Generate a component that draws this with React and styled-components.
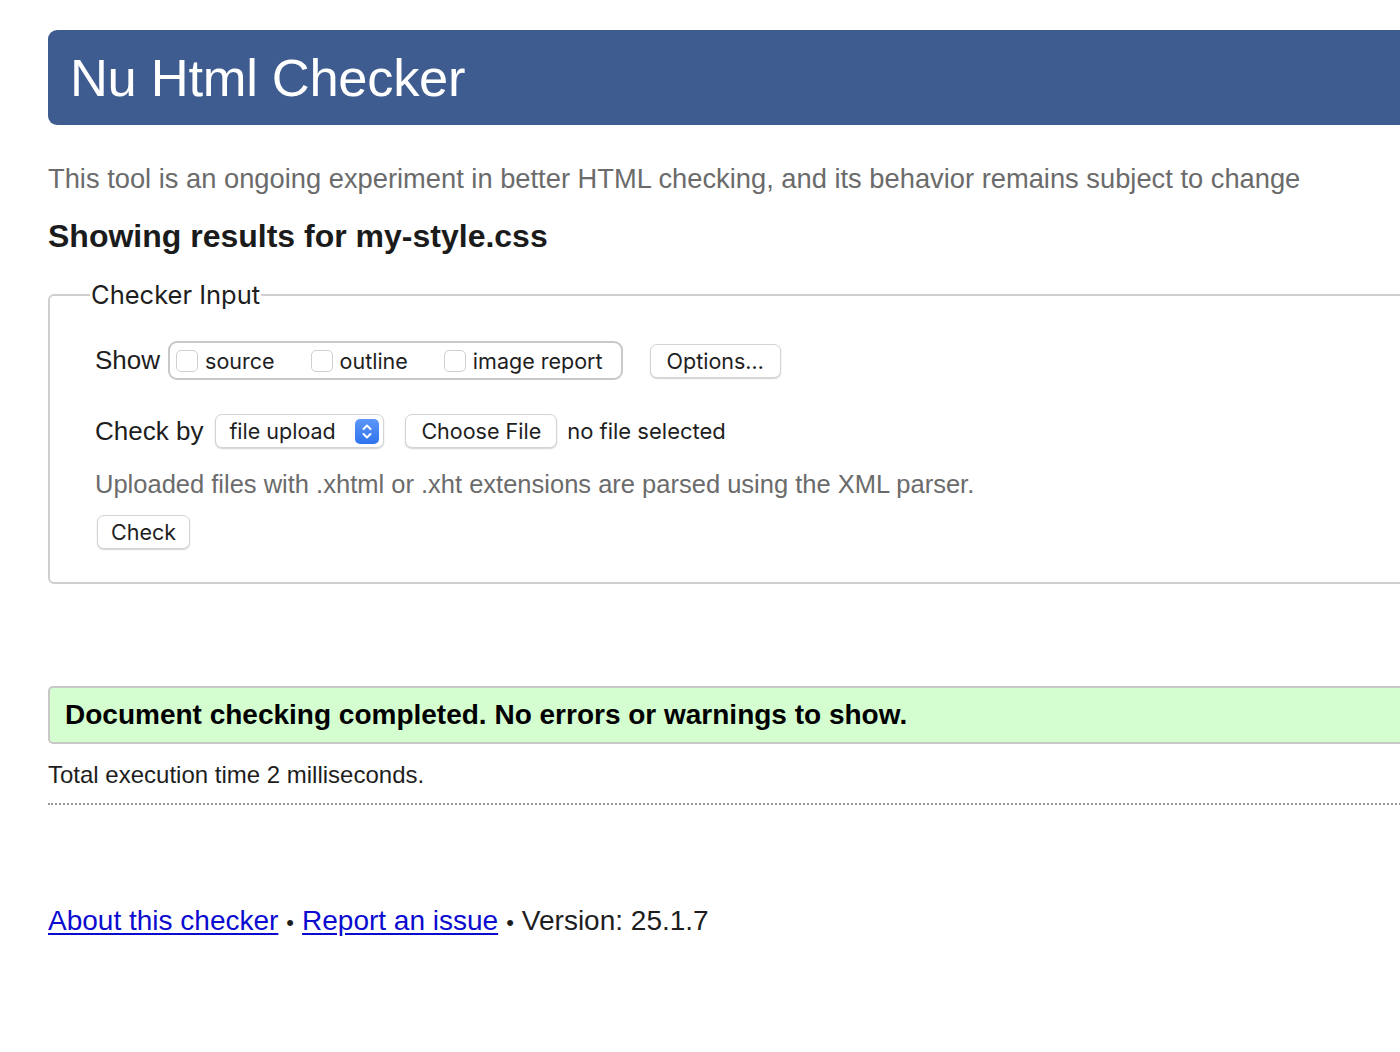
import React from "react";
import styled, { createGlobalStyle } from "styled-components";

const Global = createGlobalStyle`
  html, body { margin: 0; padding: 0; background: #fff; overflow: hidden; }
  body { font-family: "Liberation Sans", Arial, sans-serif; color: #1e1e1e; }
`;

const Page = styled.div`
  width: 1500px;
  padding: 30px 0 0 48px;
`;

const Header = styled.h1`
  margin: 0;
  height: 95px;
  display: flex;
  align-items: center;
  padding-left: 22px;
  background: #3e5c8f;
  color: #fff;
  border-radius: 9px;
  font-family: "Liberation Sans", Arial, sans-serif;
  font-weight: normal;
  font-size: 52.5px;
  letter-spacing: -0.3px;
`;

const Intro = styled.p`
  margin: 39px 0 0;
  font-size: 27.3px;
  color: #6b6b6b;
  line-height: 30px;
`;

const Results = styled.h2`
  margin: 24px 0 0;
  font-size: 32px;
  font-weight: bold;
  color: #1b1b1b;
  line-height: 36px;
`;

const Fieldset = styled.fieldset`
  margin: 27px 0 0;
  padding: 18px 0 33px 45px;
  border: 2px solid #cfcfcf;
  border-radius: 6px;
  min-width: 0;
`;

const Legend = styled.legend`
  padding: 0 1px;
  margin-left: -5px;
  font-family: Inter, "Liberation Sans", sans-serif;
  font-size: 25.5px;
  color: #1e1e1e;
  line-height: 28px;
`;

const Row = styled.div`
  display: flex;
  align-items: center;
  gap: ${(p) => p.$gap ?? 10}px;
  margin-top: ${(p) => p.$mt ?? 0}px;
`;

const Label = styled.span`
  font-family: "Liberation Sans", Arial, sans-serif;
  font-size: 26px;
  color: #1e1e1e;
  margin-right: ${(p) => p.$mr ?? 0}px;
`;

const Group = styled.div`
  display: flex;
  align-items: center;
  height: 35px;
  padding: 0 18px 0 6px;
  border: 2px solid #c8c8c8;
  border-radius: 9px;
  gap: 36px;
`;

const CheckItem = styled.label`
  display: flex;
  align-items: center;
  gap: 7px;
  font-family: Inter, "Liberation Sans", sans-serif;
  font-size: 21.5px;
  color: #1e1e1e;
`;

const Box = styled.span`
  width: 22px;
  height: 22px;
  box-sizing: border-box;
  border: 1.5px solid #cfcfcf;
  border-radius: 5px;
  background: #fff;
`;

const Button = styled.button`
  height: 34px;
  padding: 0 ${(p) => p.$px ?? 15}px;
  background: #fff;
  border: 1px solid #d4d4d4;
  border-radius: 7px;
  box-shadow: 0 1px 1.5px rgba(0, 0, 0, 0.18);
  font-family: Inter, "Liberation Sans", sans-serif;
  font-size: 21.5px;
  color: #1e1e1e;
  margin-left: ${(p) => p.$ml ?? 0}px;
`;

const Select = styled.div`
  display: flex;
  align-items: center;
  justify-content: space-between;
  box-sizing: border-box;
  width: 169px;
  height: 34px;
  padding: 0 4px 0 13px;
  background: #fff;
  border: 1px solid #d4d4d4;
  border-radius: 7px;
  box-shadow: 0 1px 1.5px rgba(0, 0, 0, 0.18);
  font-family: Inter, "Liberation Sans", sans-serif;
  font-size: 21.5px;
  color: #1e1e1e;
`;

const Arrow = styled.span`
  width: 24px;
  height: 25px;
  border-radius: 5px;
  background: linear-gradient(#5c97f7, #2f73ee);
  display: flex;
  align-items: center;
  justify-content: center;
`;

const FileText = styled.span`
  font-family: Inter, "Liberation Sans", sans-serif;
  font-size: 22px;
  color: #1e1e1e;
  margin-left: 10px;
`;

const Note = styled.p`
  margin: 21px 0 0;
  font-size: 25.5px;
  color: #6b6b6b;
  line-height: 30px;
`;

const CheckRow = styled.div`
  margin-top: 16px;
  display: flex;
`;

const Success = styled.div`
  margin-top: 102px;
  height: 58px;
  box-sizing: border-box;
  display: flex;
  align-items: center;
  padding-left: 15px;
  background: #d4fdd0;
  border: 2px solid #c8c8c8;
  border-radius: 5px;
  font-weight: bold;
  font-size: 28px;
  color: #000;
`;

const Exec = styled.p`
  margin: 17px 0 0;
  font-size: 24px;
  color: #1e1e1e;
  line-height: 28px;
  padding-bottom: 14px;
  border-bottom: 2px dotted #9a9a9a;
`;

const Footer = styled.p`
  margin: 99px 0 0;
  font-size: 28px;
  color: #1e1e1e;
  line-height: 34px;
`;

const Link = styled.a`
  color: #0b0bd0;
  text-decoration: underline;
  text-underline-offset: 3px;
`;

const Sep = styled.span`
  margin: 0 8px;
  font-size: 22px;
`;

export default function App() {
  return (
    <>
      <Global />
      <Page>
        <Header>Nu Html Checker</Header>
        <Intro>
          This tool is an ongoing experiment in better HTML checking, and its behavior remains subject to change
        </Intro>
        <Results>Showing results for my-style.css</Results>
        <Fieldset>
          <Legend>Checker Input</Legend>
          <Row $mt={14} $gap={0}>
            <Label $mr={8}>Show</Label>
            <Group>
              <CheckItem><Box />source</CheckItem>
              <CheckItem><Box />outline</CheckItem>
              <CheckItem><Box />image report</CheckItem>
            </Group>
            <Button $ml={27} $px={16}>Options…</Button>
          </Row>
          <Row $mt={34} $gap={0}>
            <Label $mr={12}>Check by</Label>
            <Select>
              file upload
              <Arrow>
                <svg width="12" height="17" viewBox="0 0 12 17" fill="none" stroke="#fff" strokeWidth="2" strokeLinecap="round" strokeLinejoin="round">
                  <path d="M2.5 6 L6 2.5 L9.5 6" />
                  <path d="M2.5 11 L6 14.5 L9.5 11" />
                </svg>
              </Arrow>
            </Select>
            <Button $ml={21}>Choose File</Button>
            <FileText>no file selected</FileText>
          </Row>
          <Note>Uploaded files with .xhtml or .xht extensions are parsed using the XML parser.</Note>
          <CheckRow>
            <Button $px={13} $ml={2}>Check</Button>
          </CheckRow>
        </Fieldset>
        <Success>Document checking completed. No errors or warnings to show.</Success>
        <Exec>Total execution time 2 milliseconds.</Exec>
        <Footer>
          <Link href="#">About this checker</Link>
          <Sep>•</Sep>
          <Link href="#">Report an issue</Link>
          <Sep>•</Sep>
          Version: 25.1.7
        </Footer>
      </Page>
    </>
  );
}
